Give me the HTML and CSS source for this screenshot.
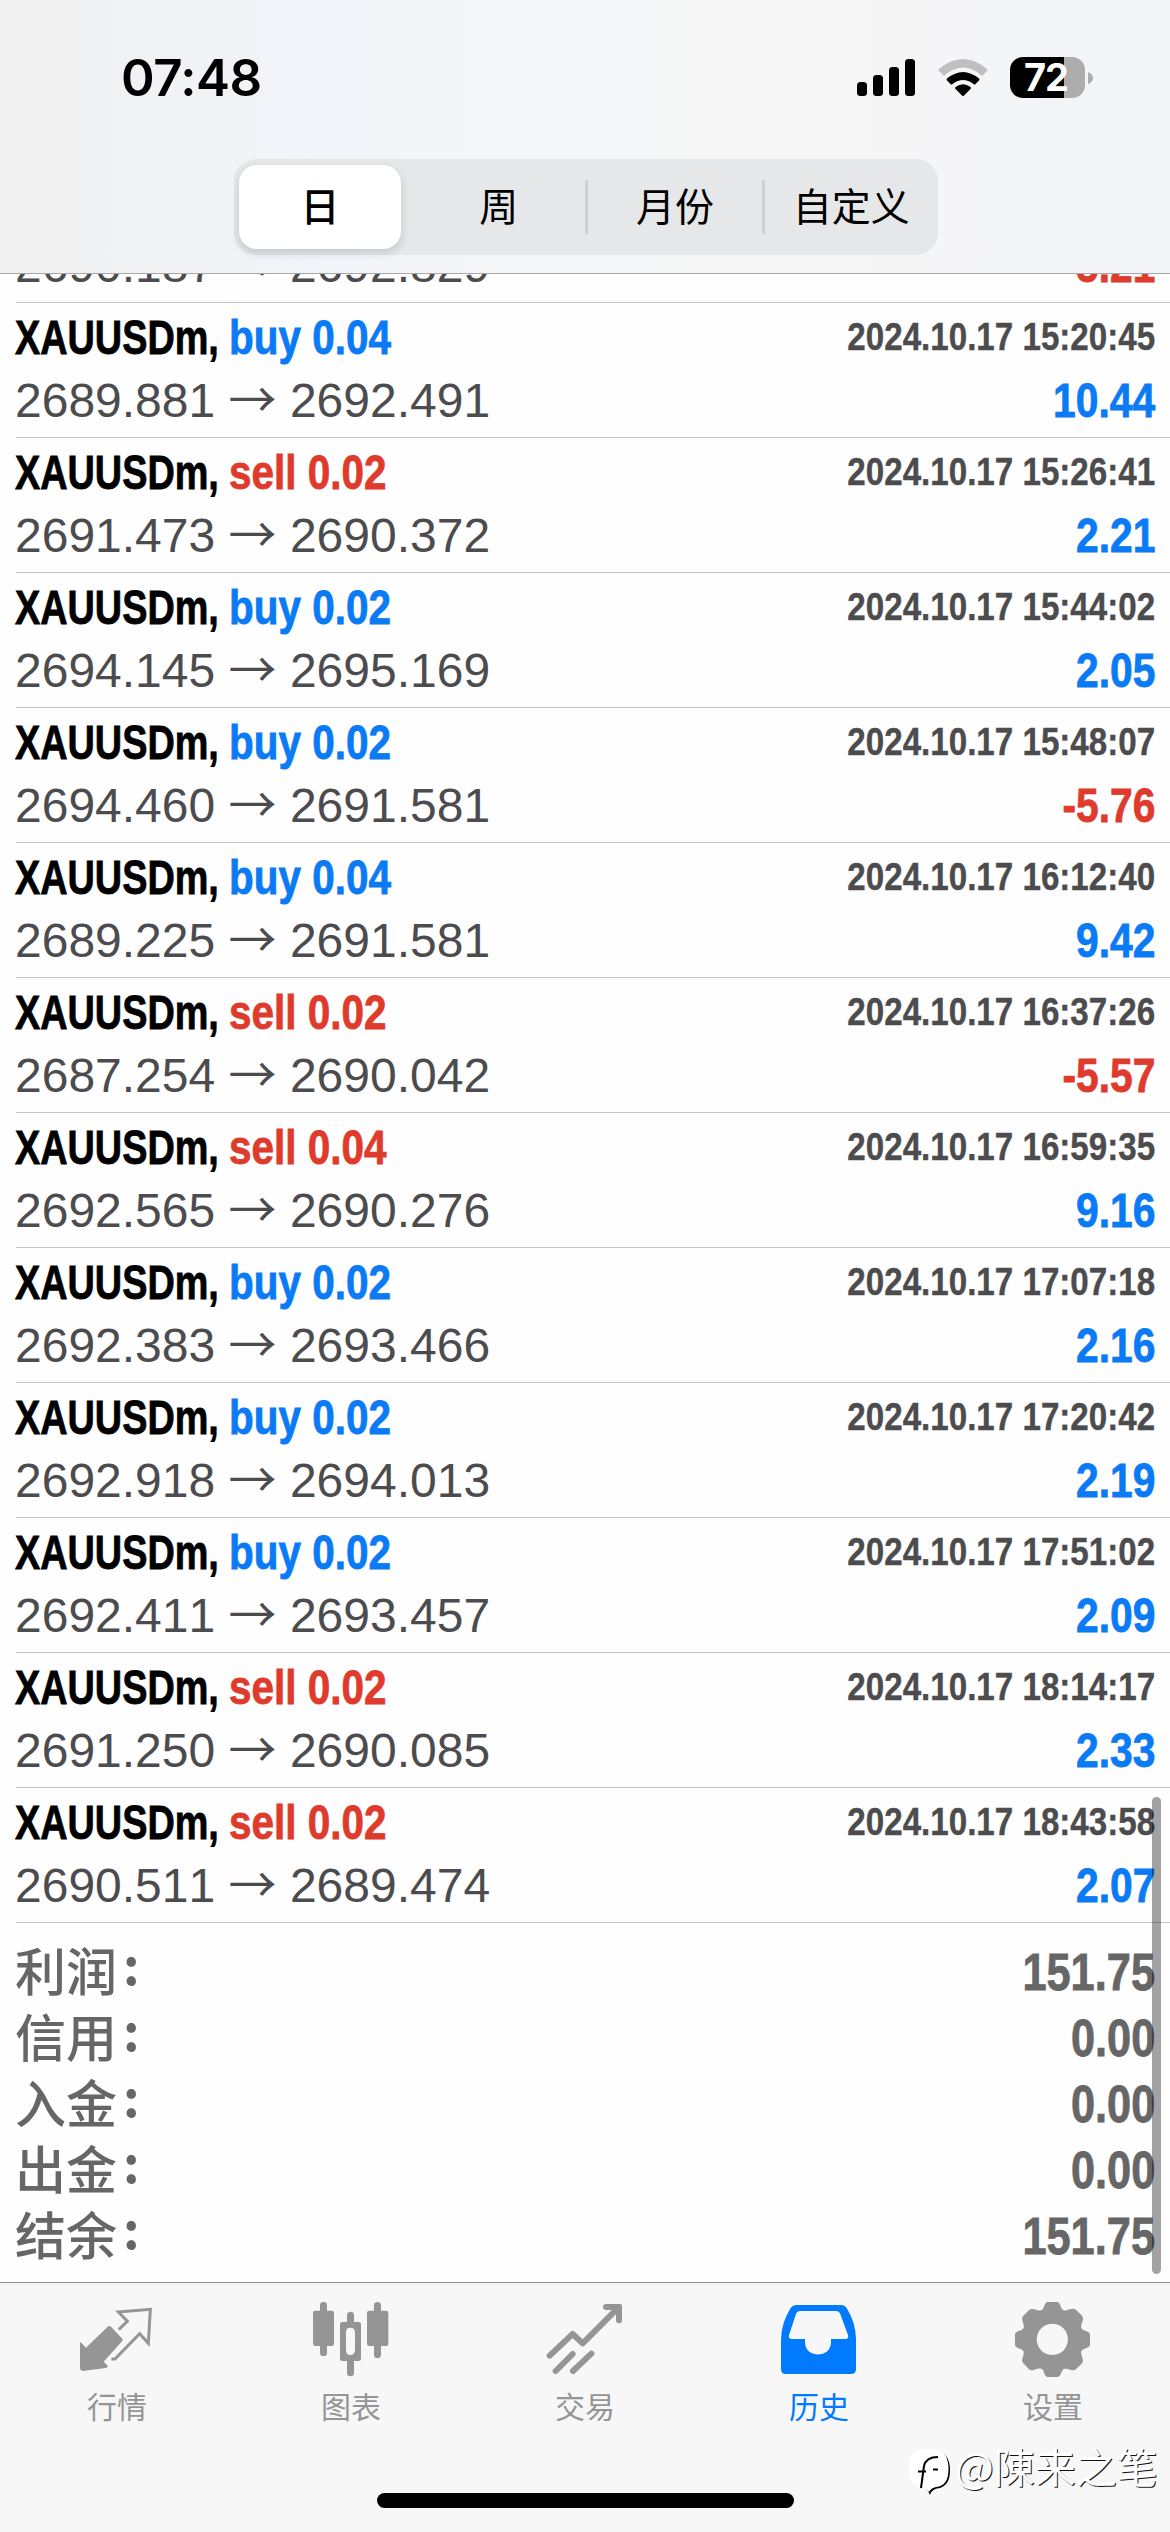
FILE: index.html
```html
<!DOCTYPE html>
<html lang="zh-CN">
<head>
<meta charset="utf-8">
<title>历史</title>
<link rel="stylesheet" href="styles.css">
</head>
<body>
<div class="screen">
  <header class="top">
    <div class="status">
      <div class="clock">07:48</div>
      <div class="indicators">
        <svg class="signal" viewBox="0 0 58 38"><rect x="0" y="23" width="10" height="14" rx="3.5"/><rect x="16" y="16" width="10" height="21" rx="3.5"/><rect x="32" y="8" width="10" height="29" rx="3.5"/><rect x="48" y="0" width="10" height="37" rx="3.5"/></svg>
        <svg class="wifi" viewBox="0 0 50 38"><path class="faint" d="M1 10Q0 11 1 12L5 16Q6 17 7 16Q25 1 43 16Q44 17 45 16L49 12Q50 11 49 10Q25-10 1 10Z"/><path d="M9 19.500Q8 20.500 9 21.500L12.500 25Q13.500 26 14.500 25Q25 17 35.500 25Q36.500 26 37.500 25L41 21.500Q42 20.500 41 19.500Q25 6.500 9 19.500Z"/><path d="M17.500 28Q16.500 29 17.500 30L24 36.500Q25 37.500 26 36.500L32.500 30Q33.500 29 32.500 28Q25 22.500 17.500 28Z"/></svg>
        <div class="battery"><span class="battery-body">72</span><svg class="battery-cap" viewBox="0 0 5 12"><path d="M0 0Q5 2 5 6T0 12Z"/></svg></div>
      </div>
    </div>
    <nav class="segments">
      <div class="segment selected">日</div>
      <div class="segment">周</div>
      <div class="segment ruled">月份</div>
      <div class="segment ruled">自定义</div>
    </nav>
  </header>

  <main class="content">
    <div class="deals">
      <div class="deal partial"><div class="line"><span class="prices">2690.187 <i>→</i> 2692.829</span><span class="profit sell">-5.21</span></div></div>
      <div class="deal"><div class="line"><span class="symbol">XAUUSDm,</span><span class="side buy">buy 0.04</span><span class="time">2024.10.17 15:20:45</span></div><div class="line"><span class="prices">2689.881 <i>→</i> 2692.491</span><span class="profit buy">10.44</span></div></div>
      <div class="deal"><div class="line"><span class="symbol">XAUUSDm,</span><span class="side sell">sell 0.02</span><span class="time">2024.10.17 15:26:41</span></div><div class="line"><span class="prices">2691.473 <i>→</i> 2690.372</span><span class="profit buy">2.21</span></div></div>
      <div class="deal"><div class="line"><span class="symbol">XAUUSDm,</span><span class="side buy">buy 0.02</span><span class="time">2024.10.17 15:44:02</span></div><div class="line"><span class="prices">2694.145 <i>→</i> 2695.169</span><span class="profit buy">2.05</span></div></div>
      <div class="deal"><div class="line"><span class="symbol">XAUUSDm,</span><span class="side buy">buy 0.02</span><span class="time">2024.10.17 15:48:07</span></div><div class="line"><span class="prices">2694.460 <i>→</i> 2691.581</span><span class="profit sell">-5.76</span></div></div>
      <div class="deal"><div class="line"><span class="symbol">XAUUSDm,</span><span class="side buy">buy 0.04</span><span class="time">2024.10.17 16:12:40</span></div><div class="line"><span class="prices">2689.225 <i>→</i> 2691.581</span><span class="profit buy">9.42</span></div></div>
      <div class="deal"><div class="line"><span class="symbol">XAUUSDm,</span><span class="side sell">sell 0.02</span><span class="time">2024.10.17 16:37:26</span></div><div class="line"><span class="prices">2687.254 <i>→</i> 2690.042</span><span class="profit sell">-5.57</span></div></div>
      <div class="deal"><div class="line"><span class="symbol">XAUUSDm,</span><span class="side sell">sell 0.04</span><span class="time">2024.10.17 16:59:35</span></div><div class="line"><span class="prices">2692.565 <i>→</i> 2690.276</span><span class="profit buy">9.16</span></div></div>
      <div class="deal"><div class="line"><span class="symbol">XAUUSDm,</span><span class="side buy">buy 0.02</span><span class="time">2024.10.17 17:07:18</span></div><div class="line"><span class="prices">2692.383 <i>→</i> 2693.466</span><span class="profit buy">2.16</span></div></div>
      <div class="deal"><div class="line"><span class="symbol">XAUUSDm,</span><span class="side buy">buy 0.02</span><span class="time">2024.10.17 17:20:42</span></div><div class="line"><span class="prices">2692.918 <i>→</i> 2694.013</span><span class="profit buy">2.19</span></div></div>
      <div class="deal"><div class="line"><span class="symbol">XAUUSDm,</span><span class="side buy">buy 0.02</span><span class="time">2024.10.17 17:51:02</span></div><div class="line"><span class="prices">2692.411 <i>→</i> 2693.457</span><span class="profit buy">2.09</span></div></div>
      <div class="deal"><div class="line"><span class="symbol">XAUUSDm,</span><span class="side sell">sell 0.02</span><span class="time">2024.10.17 18:14:17</span></div><div class="line"><span class="prices">2691.250 <i>→</i> 2690.085</span><span class="profit buy">2.33</span></div></div>
      <div class="deal"><div class="line"><span class="symbol">XAUUSDm,</span><span class="side sell">sell 0.02</span><span class="time">2024.10.17 18:43:58</span></div><div class="line"><span class="prices">2690.511 <i>→</i> 2689.474</span><span class="profit buy">2.07</span></div></div>
    </div>
    <div class="summary">
      <div class="total"><span class="label">利润<b>:</b></span><span class="amount">151.75</span></div>
      <div class="total"><span class="label">信用<b>:</b></span><span class="amount">0.00</span></div>
      <div class="total"><span class="label">入金<b>:</b></span><span class="amount">0.00</span></div>
      <div class="total"><span class="label">出金<b>:</b></span><span class="amount">0.00</span></div>
      <div class="total"><span class="label">结余<b>:</b></span><span class="amount">151.75</span></div>
    </div>
    <div class="scrollbar"></div>
  </main>

  <footer class="bottom">
    <nav class="tabs">
      <div class="tab"><svg viewBox="51 54 240 240"><path d="M60 185L78 203L143 140Q148 136 153 140L187 176Q190 180 186 184L131 245L143 257Q144 263 138 264L68 273Q60 272 60 265Z"/><path class="stroke" stroke-width="9" d="M176 149L202 124L175 96L271 88L265 190L239 161L165 237H154"/></svg><span>行情</span></div>
      <div class="tab"><svg viewBox="753 54 240 240"><rect x="780" y="66" width="21" height="162" rx="10"/><rect x="759" y="92" width="63" height="106" rx="7"/><rect x="942" y="66" width="21" height="168" rx="10"/><rect x="921" y="92" width="64" height="106" rx="7"/><path fill-rule="evenodd" d="M861 126V106A10.500 10.500 0 0 1 882 106V126H896Q903 126 903 133V236Q903 243 896 243H882V278A10.500 10.500 0 0 1 861 278V243H847Q840 243 840 236V133Q840 126 847 126ZM858 157V211Q858 225 871 225T885 211V157Q885 143 871 143T858 157Z"/></svg><span>图表</span></div>
      <div class="tab"><svg viewBox="75 54 240 240"><path class="stroke round" stroke-width="18" d="M89 227L158 162L188 190L292 86M258 81H297V121M107 273L158 222M159 273L214 221"/><path d="M278 72H299Q306 72 306 79V100H285Z"/></svg><span>交易</span></div>
      <div class="tab active"><svg viewBox="777 54 240 240"><path fill-rule="evenodd" d="M828 75H963Q974 75 980 84Q1008 130 1008 178V267Q1008 282 993 282H797Q783 282 783 267V178Q784 129 812 84Q818 75 828 75ZM842 93Q831 93 828 102L807 165Q804 177 816 177H855V187C855 236 933 236 933 187V177H976Q987 177 984 165L961 103Q957 93 948 93Z"/></svg><span>历史</span></div>
      <div class="tab"><svg viewBox="369 54 240 240"><path fill-rule="evenodd" d="M471 66H504Q509 69 512 79Q516 92 526 92Q534 88 544 87Q553 85 558 89L576 107Q581 113 578 123Q572 136 574 145Q579 151 588 153Q598 156 600 162V195Q598 202 588 205Q578 207 574 213Q572 221 577 233Q581 243 576 250L558 268Q552 273 541 269Q529 264 521 267Q515 272 512 283Q509 290 503 291H472Q466 289 463 281Q460 267 454 266Q445 264 433 269Q423 273 417 268L400 250Q394 244 398 233Q403 220 400 213Q395 207 386 205Q376 202 375 195V163Q376 155 386 153Q397 151 401 144Q403 136 398 125Q394 113 400 107L418 89Q423 85 433 88Q446 93 454 91Q460 88 463 77Q466 68 471 66ZM487 131A47 47 0 1 0 487.010 131Z"/></svg><span>设置</span></div>
    </nav>
    <div class="home"></div>
  </footer>

  <div class="watermark">
    <svg viewBox="0 0 42 48"><path class="bubble-shadow" d="M13 2H27Q41 4 41 21T28 39.500Q22 41 21 46L18 40V2Z"/><path class="bubble" d="M13 0H27Q39.500 3 39.500 20T27 38Q22 39 20 43L16 38H10Q0 34 0 24V14Q0 2 13 0Z"/><path class="letter" d="M12 39L15 17Q17 8 29 8M9 22.500H17M24 20.500H29"/></svg>
    <span>@陳来之笔</span>
  </div>
</div>
</body>
</html>
```
FILE: styles.css
```css
* { box-sizing: border-box; }

body {
  margin: 0;
  background: #fefefe;
  font-family: "Liberation Sans", "Noto Sans CJK SC", sans-serif;
}

.screen {
  position: relative;
  display: flex;
  flex-direction: column;
  width: 1170px;
  height: 2532px;
  overflow: hidden;
}

/* Status bar and period switch */
.top {
  flex: none;
  height: 274px;
  border-bottom: 1px solid #a8a8aa;
  background: linear-gradient(90deg, #f0f0f0 0%, #f1f2f4 14%, #f1f4f9 27%, #f5f6f8 42%, #f6f6f6 70%, #f3f4f8 100%);
}

.status {
  display: flex;
  justify-content: space-between;
  height: 159px;
  padding: 48px 78px 0 121px;
}

.clock {
  height: 60px;
  font: 600 51px/60px Inter, sans-serif;
  letter-spacing: -0.5px;
}

.indicators {
  display: flex;
  align-items: flex-start;
  padding-top: 9px;
}

.signal { width: 58px; height: 38px; margin-top: 2px; }
.wifi { width: 50px; height: 38px; margin: 2px 22px 0 23px; }
.wifi .faint { fill: #bfbfbf; }
.battery { display: flex; align-items: center; gap: 3px; margin-right: -1px; }

.battery-body {
  width: 75px;
  height: 41px;
  border-radius: 13px;
  padding-left: 14px;
  background: linear-gradient(90deg, #000 54px, #adadad 54px);
  color: #fff;
  font: 700 38px/41px Inter, sans-serif;
  letter-spacing: -1px;
}

.battery-cap { width: 5px; height: 12px; fill: #adadad; }

.segments {
  display: flex;
  width: 704px;
  height: 96px;
  margin: 0 auto 0 234px;
  padding: 6px 0;
  border-radius: 22px;
  background: #e6e7e8;
}

.segment {
  display: flex;
  flex: 1;
  align-items: center;
  justify-content: center;
  padding: 0 0 5px 3px;
  font: 400 39px/79px "Noto Sans CJK SC", sans-serif;
}

.segment.ruled {
  background: linear-gradient(#d0d0d1, #d0d0d1) 0 15px / 3px 54px no-repeat;
}

.segment.selected {
  flex: 0 0 162px;
  margin: 0 8px 0 5px;
  padding-left: 0;
  border-radius: 18px;
  background: #fff;
  font-weight: 500;
  box-shadow: 0 4px 10px rgba(0, 0, 0, .14);
}

/* Deal history */
.content {
  position: relative;
  flex: none;
  height: 2008px;
  overflow: hidden;
  color: #4c4c4e;
}

.deals { margin-top: -40px; }

.deal {
  height: 135px;
  margin-left: 16px;
  padding-top: 3px;
  border-bottom: 1px solid #c4c4c6;
}

.deal.partial { height: 69px; padding-top: 0; }

.line {
  display: flex;
  height: 63px;
  margin-left: -1px;
  padding-right: 15px;
  font-size: 48px;
  font-kerning: none;
  line-height: 63px;
  white-space: nowrap;
}

.symbol, .side, .time, .profit, .amount {
  font-weight: 700;
  -webkit-text-stroke: .8px currentColor;
}

.symbol {
  width: 214px;
  color: #000;
  font-kerning: normal;
  transform: scaleX(.788);
  transform-origin: left;
}

.side { transform: scaleX(.843); transform-origin: left; }

.time {
  margin: -1px 0 0 auto;
  font-size: 39px;
  transform: scaleX(.85);
  transform-origin: right;
  -webkit-text-stroke-width: .4px;
}

.prices i {
  font-family: "Noto Sans CJK SC", sans-serif;
  font-style: normal;
  line-height: 1px;
}

.profit {
  margin-left: auto;
  transform: scaleX(.85);
  transform-origin: right;
}

.buy { color: #0a7af5; }
.sell { color: #de3b2d; }

.summary { padding: 16px 15px 0; color: #666; }

.total {
  display: flex;
  justify-content: space-between;
  height: 66px;
  line-height: 66px;
}

.label {
  display: flex;
  margin-top: -3px;
  font: 500 51px/66px "Noto Sans CJK SC", sans-serif;
}

.label b {
  margin: -6px 0 0 6px;
  font-weight: 700;
}

.amount {
  margin-top: 1px;
  font-size: 51px;
  font-kerning: none;
  transform: scaleX(.85);
  transform-origin: right;
}

.scrollbar {
  position: absolute;
  top: 1523px;
  right: 9px;
  width: 9px;
  height: 477px;
  border-radius: 5px;
  background: rgba(0, 0, 0, .36);
}

/* Tab bar */
.bottom {
  display: flex;
  flex: 1;
  flex-direction: column;
  align-items: center;
  border-top: 1px solid #8e8e90;
  background: #f7f7f7;
}

.tabs { display: flex; width: 100%; height: 210px; padding-top: 15px; }

.tab {
  display: flex;
  flex: 1;
  flex-direction: column;
  align-items: center;
  color: #959595;
  font: 400 30px/44px "Noto Sans CJK SC", sans-serif;
}

.tab svg { width: 80px; height: 80px; fill: currentColor; }
.tab span { margin-top: 5px; }
.tab .stroke { fill: none; stroke: currentColor; }
.tab .round { stroke-linecap: round; stroke-linejoin: round; }
.tab.active { color: #007aff; }

.home { width: 417px; height: 15px; border-radius: 8px; background: #000; }

.watermark {
  position: absolute;
  top: 2432px;
  left: 909px;
  display: flex;
  align-items: center;
  gap: 4px;
  color: #fff;
  font: 400 41px/54px "Noto Sans CJK SC", sans-serif;
  text-shadow: 1px 1px 0 #111;
}

.watermark svg { width: 42px; height: 48px; margin-top: 17px; }
.bubble { fill: #fff; }
.bubble-shadow { fill: #000; }
.letter { fill: none; stroke: #000; stroke-width: 2; }
```
